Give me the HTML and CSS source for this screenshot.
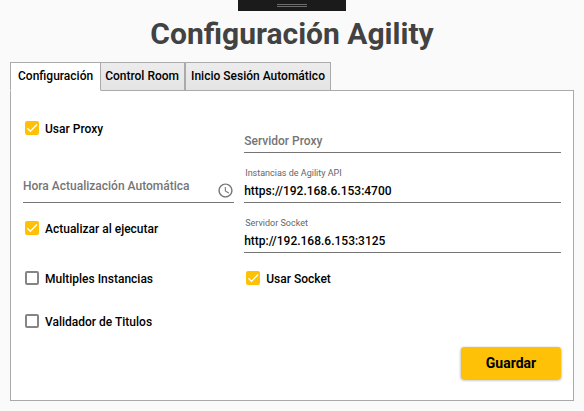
FILE: index.html
```
<!DOCTYPE html>
<html lang="es">
<head>
    <meta charset="UTF-8">
    <meta name="viewport" content="width=device-width, initial-scale=1.0">
    <title>Configuración Agility</title>
    <link rel="stylesheet" href="styles.css">
</head>
<body>

<div class="handle"><span></span></div>

<h1>Configuración Agility</h1>

<div class="tabs" role="tablist">
    <button type="button" class="tab active" role="tab" aria-selected="true">Configuración</button>
    <button type="button" class="tab" role="tab" aria-selected="false">Control Room</button>
    <button type="button" class="tab" role="tab" aria-selected="false">Inicio Sesión Automático</button>
</div>

<form class="panel">
    <div class="form-grid">
        <label class="check"><input type="checkbox" checked><span>Usar Proxy</span></label>
        <div class="field">
            <label for="proxy">Servidor Proxy</label>
            <input type="text" id="proxy">
        </div>

        <div class="field with-icon">
            <label for="hora">Hora Actualización Automática</label>
            <input type="text" id="hora">
            <svg class="clock" viewBox="0 0 24 24" aria-hidden="true">
                <path d="M11.99 2C6.47 2 2 6.48 2 12s4.47 10 9.99 10C17.52 22 22 17.52 22 12S17.52 2 11.99 2zM12 20c-4.42 0-8-3.58-8-8s3.58-8 8-8 8 3.58 8 8-3.58 8-8 8z"/>
                <path d="M12.5 7H11v6l5.25 3.15.75-1.23-4.5-2.67z"/>
            </svg>
        </div>
        <div class="field filled">
            <label for="api">Instancias de Agility API</label>
            <input type="text" id="api" value="https://192.168.6.153:4700">
        </div>

        <label class="check"><input type="checkbox" checked><span>Actualizar al ejecutar</span></label>
        <div class="field filled">
            <label for="socket">Servidor Socket</label>
            <input type="text" id="socket" value="http://192.168.6.153:3125">
        </div>

        <label class="check"><input type="checkbox"><span>Multiples Instancias</span></label>
        <label class="check"><input type="checkbox" checked><span>Usar Socket</span></label>

        <label class="check"><input type="checkbox"><span>Validador de Titulos</span></label>
    </div>

    <div class="actions">
        <button type="submit" class="btn">Guardar</button>
    </div>
</form>

</body>
</html>
```
FILE: styles.css
```
* {
    box-sizing: border-box;
}

body {
    margin: 0;
    padding: 14px 10px 10px;
    background-color: #fafafa;
    color: #000;
    font-family: Roboto, "Liberation Sans", sans-serif;
    font-size: 12px;
    font-weight: 500;
}

button,
input {
    font: inherit;
    color: inherit;
}

/* window handle, over the top edge */
.handle {
    position: absolute;
    top: 0;
    left: 50%;
    width: 108px;
    height: 11px;
    transform: translateX(-50%);
    background-color: #1b1b1b;
}

.handle span {
    display: block;
    width: 30px;
    height: 3px;
    margin: 4px auto 0;
    border: solid #6c6c6c;
    border-width: 1px 0;
}

h1 {
    margin: 0 0 8px;
    color: #424242;
    font-size: 30px;
    font-weight: 700;
    line-height: 40px;
    text-align: center;
}

/* tabs */
.tabs {
    display: flex;
}

.tab {
    position: relative;
    height: 29px;
    margin: 0;
    padding: 0 5px 2px;
    border: 1px solid #aaa;
    background: linear-gradient(#ececec, #e4e4e4);
    cursor: pointer;
}

.tab.active {
    z-index: 1;
    margin-right: -2px;
    padding: 0 7px 2px;
    border-bottom-color: #fff;
    background: #fff;
}

.panel {
    margin-top: -1px;
    padding: 12px 12px 21px;
    border: 1px solid #aaa;
    background-color: #fff;
}

.form-grid {
    display: grid;
    grid-template-columns: 2fr 3fr;
    grid-template-rows: repeat(4, 50px) 36px;
    column-gap: 10px;
}

/* checkboxes */
.check {
    display: flex;
    align-items: center;
    gap: 6px;
    padding-left: 2px;
}

.check span {
    padding-top: 1px;
}

.check input {
    appearance: none;
    width: 14px;
    height: 14px;
    margin: 0;
    border: 2px solid #858585;
    border-radius: 2px;
}

.check input:checked {
    border: none;
    background-color: #ffc107;
}

.check input:checked::before {
    content: "";
    display: block;
    width: 14px;
    height: 14px;
    background-color: #fff;
    clip-path: polygon(13% 55%, 38% 80%, 89% 29%, 82% 22%, 38% 66%, 20% 48%);
}

/* text fields with floating label */
.field {
    position: relative;
    display: flex;
    align-items: flex-end;
    border-bottom: 1px solid #757575;
}

.field label {
    position: absolute;
    left: 0;
    bottom: 3px;
    color: #757575;
    line-height: 16px;
    pointer-events: none;
}

.field.with-icon label {
    bottom: 8px;
}

.field.filled label {
    left: 1px;
    bottom: 21px;
    color: #666;
    font-size: 9px;
    font-weight: 400;
}

.field input {
    flex: 1;
    min-width: 0;
    height: 22px;
    padding: 0;
    border: none;
    outline: none;
    background: none;
}

.clock {
    width: 17px;
    height: 17px;
    margin-bottom: 3px;
    fill: #757575;
}

/* save */
.actions {
    display: flex;
    justify-content: flex-end;
    margin-top: 8px;
}

.btn {
    width: 100px;
    height: 32px;
    border: none;
    border-radius: 3px;
    background-color: #ffc107;
    box-shadow: 0 1px 3px rgba(0, 0, 0, 0.4);
    font-size: 14px;
    font-weight: 700;
    cursor: pointer;
}
```
